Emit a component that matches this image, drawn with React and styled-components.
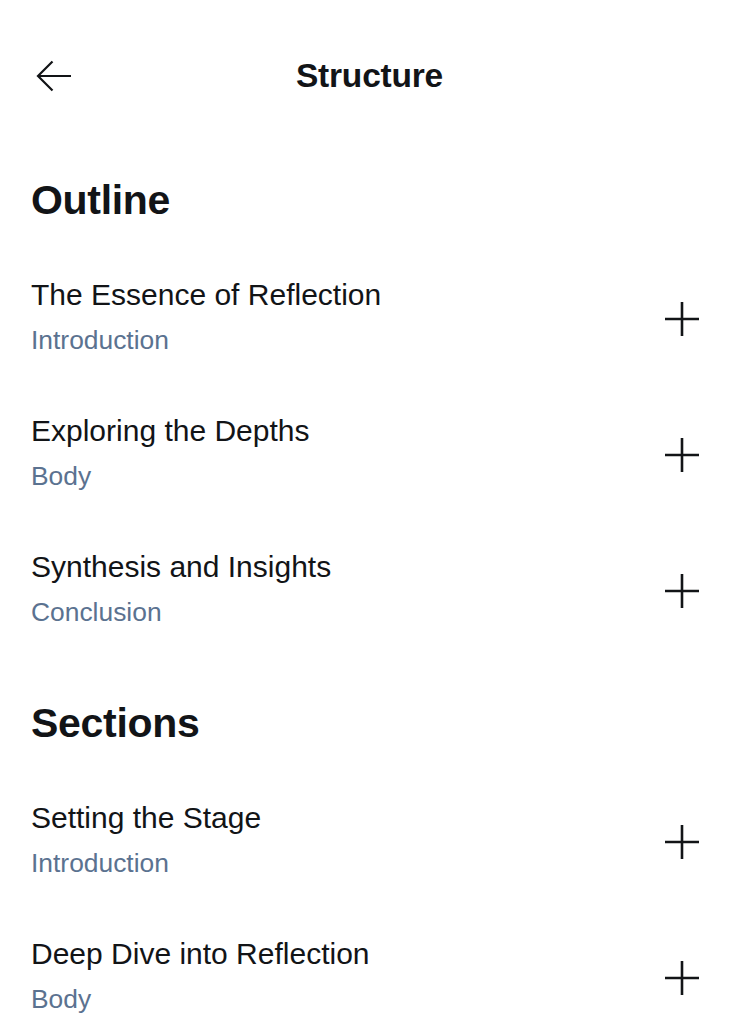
import styled, { createGlobalStyle } from "styled-components";

const GlobalStyle = createGlobalStyle`
  body {
    margin: 0;
    background: #fff;
    font-family: "Liberation Sans", Arial, sans-serif;
    color: #121417;
  }
`;

const Page = styled.div`
  width: 100%;
  padding: 0 31px;
  box-sizing: border-box;
`;

const Header = styled.header`
  display: grid;
  grid-template-columns: 1fr auto 1fr;
  align-items: center;
  height: 104px;
  margin-top: 24px;
  margin-bottom: 6px;
`;

const BackButton = styled.button`
  justify-self: start;
  display: flex;
  align-items: center;
  background: none;
  border: none;
  padding: 0 0 0 5px;
  cursor: pointer;
  color: #121417;
`;

const HeaderTitle = styled.h1`
  margin: 0;
  font-size: 33.5px;
  font-weight: 700;
  letter-spacing: -0.2px;
`;

const Section = styled.section`
  padding-top: 42px;
`;

const SectionTitle = styled.h2`
  margin: 0 0 25px;
  font-size: 41px;
  line-height: 48px;
  font-weight: 700;
  letter-spacing: -0.3px;
`;

const Row = styled.div`
  display: flex;
  align-items: center;
  justify-content: space-between;
  padding: 29px 0;
`;

const RowText = styled.div`
  display: flex;
  flex-direction: column;
  gap: 12px;
`;

const RowTitle = styled.span`
  font-size: 30px;
  line-height: 34px;
  color: #121417;
`;

const RowSub = styled.span`
  font-size: 26.4px;
  line-height: 32px;
  color: #5b7290;
`;

const AddButton = styled.button`
  width: 52px;
  height: 52px;
  display: flex;
  align-items: center;
  justify-content: center;
  background: none;
  border: none;
  padding: 0;
  margin-top: 4px;
  cursor: pointer;
  color: #121417;
`;

const outline = [
  { title: "The Essence of Reflection", kind: "Introduction" },
  { title: "Exploring the Depths", kind: "Body" },
  { title: "Synthesis and Insights", kind: "Conclusion" },
];

const sections = [
  { title: "Setting the Stage", kind: "Introduction" },
  { title: "Deep Dive into Reflection", kind: "Body" },
];

const ArrowLeft = () => (
  <svg width="36" height="32" viewBox="0 0 36 32" fill="none" stroke="currentColor" strokeWidth="2.2">
    <path d="M35 16H2" />
    <path d="M16.5 1.5L2 16l14.5 14.5" />
  </svg>
);

const Plus = () => (
  <svg width="34" height="34" viewBox="0 0 34 34" fill="none" stroke="currentColor" strokeWidth="2.6">
    <path d="M17 0v34M0 17h34" />
  </svg>
);

const Item = ({ item }) => (
  <Row>
    <RowText>
      <RowTitle>{item.title}</RowTitle>
      <RowSub>{item.kind}</RowSub>
    </RowText>
    <AddButton aria-label="Add">
      <Plus />
    </AddButton>
  </Row>
);

const App = () => {
  return (
    <>
      <GlobalStyle />
      <Page>
        <Header>
          <BackButton aria-label="Back">
            <ArrowLeft />
          </BackButton>
          <HeaderTitle>Structure</HeaderTitle>
          <span />
        </Header>
        <Section>
          <SectionTitle>Outline</SectionTitle>
          {outline.map((item) => (
            <Item key={item.title} item={item} />
          ))}
        </Section>
        <Section>
          <SectionTitle>Sections</SectionTitle>
          {sections.map((item) => (
            <Item key={item.title} item={item} />
          ))}
        </Section>
      </Page>
    </>
  );
};

export default App;
